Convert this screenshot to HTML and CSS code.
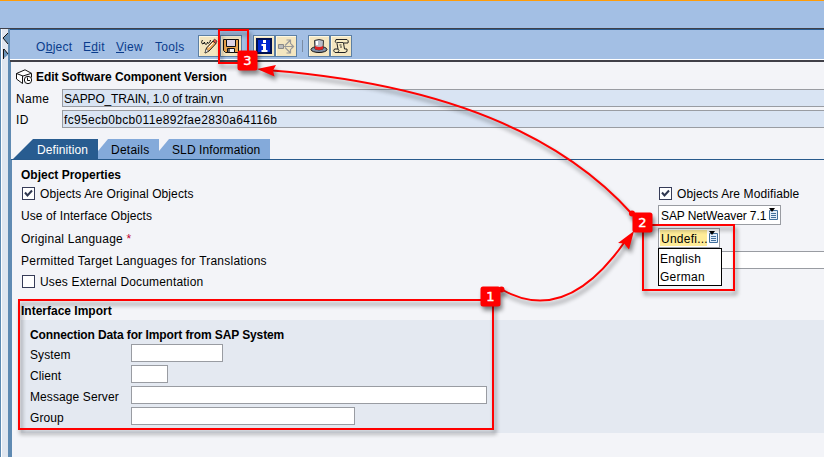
FILE: index.html
```html
<!DOCTYPE html>
<html lang="en">

<head>
    <meta charset="UTF-8" />
    <meta name="viewport" content="width=device-width, initial-scale=1.0" />
    <title>Edit Software Component Version</title>
    <link rel="stylesheet" href="styles.css">
</head>

<body>

    <div class="top-strip"></div>

    <div class="workspace">
        <div class="rail">
            <svg width="10" height="34" viewBox="0 0 10 34">
                <path d="M9 3v13L3 9z" fill="#6a93b8" />
                <path d="M8 4L3 9l5 6" fill="none" stroke="#111" />
                <path d="M3 20v10l6-5z" fill="#6a93b8" />
                <path d="M3.5 20v10M4 20l4 5" fill="none" stroke="#111" />
            </svg>
        </div>

        <div class="main">
            <div class="toolbar">
                <div class="menu">
                    <span class="m-object">O<u>b</u>ject</span>
                    <span class="m-edit">E<u>d</u>it</span>
                    <span class="m-view"><u>V</u>iew</span>
                    <span class="m-tools">Too<u>l</u>s</span>
                </div>
                <div class="tools">
                    <span class="tool">
                        <svg viewBox="0 0 18 18">
                            <path d="M5 16l1.500-5L13 4l3 2.500L9 14z" fill="#f4b060" stroke="#222" />
                            <path d="M13 4l1.500-2L17 4l-1 2.500z" fill="#e05848" stroke="#222" stroke-width=".6" />
                            <path d="M8.500 10.500L13 6" stroke="#fff" />
                            <path d="M5 16l1.200-4 2.300 2z" fill="#fff" stroke="#222" stroke-width=".5" />
                            <path d="M2.500 3C0 7 3.500 8 4.500 5c0 3 3 3 3 0 0 2 2 2 3-2M2.500 6.500h2" fill="none" stroke="#111" />
                        </svg>
                    </span>
                    <span class="tool">
                        <svg viewBox="0 0 18 18">
                            <path d="M1.500 2.500h15v13h-13l-2-2z" fill="#e8a44c" stroke="#111" />
                            <path d="M4.500 2.500h9v7h-9z" fill="#dcd4e4" stroke="#111" />
                            <path d="M5.500 11.500h7v4h-7z" fill="#f0f0f4" stroke="#111" />
                            <path d="M6 12h2v3H6z" fill="#666" />
                        </svg>
                    </span>
                    <span class="tool info">
                        <svg viewBox="0 0 18 18">
                            <path d="M2 2h14v14H2z" fill="#0028d0" stroke="#001050" stroke-width="2" />
                            <path d="M8 3h3v3H8zM6.500 7H11v6h1.500v2h-6v-2H8V9H6.500z" fill="#fff" />
                        </svg>
                    </span>
                    <span class="tool">
                        <svg viewBox="0 0 18 18">
                            <path d="M1.500 7.500h5v4h-5z" fill="#bbb" stroke="#888" />
                            <path d="M6.500 9.500H16M8 8.500l5-5M8 10.500l5 5M9.500 3h4v4M9.500 16h4v-4M14 7l2.500 2.500L14 12" fill="none" stroke="#999" stroke-width="1.200" />
                        </svg>
                    </span>
                    <i class="divider"></i>
                    <span class="tool">
                        <svg viewBox="0 0 18 18">
                            <ellipse cx="9" cy="12.500" rx="8" ry="3" fill="#8090a8" stroke="#111" />
                            <path d="M4.500 3.500q4.500-2 9 0L13 12q-4 2-8 0z" fill="#b8bcc8" stroke="#333" />
                            <path d="M5 9q4 2 8.200 0L13 12q-4 2-8 0z" fill="#e02020" />
                            <path d="M7 4v4" stroke="#fff" stroke-width="2" />
                        </svg>
                    </span>
                    <span class="tool">
                        <svg viewBox="0 0 18 18">
                            <path d="M4 2.500h11q2 1 1 3.500h-4.500l1 6H15q1 3-2 3.500H3q-2.500-1.500-.5-3.500H6L5 6.500Q2 5 4 2.500z" fill="#f8ecc4" stroke="#222" />
                            <path d="M5 5.500h6.500M6 12q2 1.500 0 3M7.500 8h2M8 10h2" fill="none" stroke="#333" />
                        </svg>
                    </span>
                </div>
            </div>

            <div class="page-head">
                <h1>
                    <svg width="17" height="16" viewBox="0 0 17 16">
                        <path d="M.5 4.500L9 .8l6.500 3.500L7 7zM.5 4.500v5.500l6 4.500V7M15.500 4.500v4" fill="#fff" stroke="#111" />
                        <circle cx="12" cy="11" r="3.700" fill="#fff" stroke="#111" />
                        <path d="M11.500 8.500v3h2.500" fill="none" stroke="#111" />
                    </svg>
                    <span>Edit Software Component Version</span>
                </h1>
                <div class="head-row"><label>Name</label><div class="readonly name-value">SAPPO_TRAIN, 1.0 of train.vn</div></div>
                <div class="head-row"><label>ID</label><div class="readonly">fc95ecb0bcb011e892fae2830a64116b</div></div>
            </div>

            <div class="tabs">
                <div class="tab active">Definition</div>
                <div class="tab details">Details</div>
                <div class="tab sld">SLD Information</div>
            </div>

            <div class="content">
                <div class="properties">
                    <div class="col-left">
                        <h2>Object Properties</h2>
                        <div class="check-row">
                            <span class="checkbox"><svg viewBox="0 0 11 11"><path d="M2 4.500l2.500 3L9 2.500" /></svg></span>
                            <span>Objects Are Original Objects</span>
                        </div>
                        <div class="line">Use of Interface Objects</div>
                        <div class="line original">Original Language <b class="required">*</b></div>
                        <div class="line permitted">Permitted Target Languages for Translations</div>
                        <div class="check-row external"><span class="checkbox"></span><span>Uses External Documentation</span></div>
                    </div>
                    <div class="col-right">
                        <div class="check-row">
                            <span class="checkbox"><svg viewBox="0 0 11 11"><path d="M2 4.500l2.500 3L9 2.500" /></svg></span>
                            <span>Objects Are Modifiable</span>
                        </div>
                        <div class="select netweaver">
                            <span>SAP NetWeaver 7.1</span>
                            <svg width="10" height="12" viewBox="0 0 10 12"><path d="M1.500 2.500h8v9h-8z" fill="#e4eefa" stroke="#42709c" /><path d="M3 5.500h5M3 7.500h5M3 9.500h5" stroke="#42709c" /><path d="M1 0h6L4 4z" /></svg>
                        </div>
                        <div class="select language">
                            <span>Undefi...</span>
                            <svg width="10" height="12" viewBox="0 0 10 12"><path d="M1.500 2.500h8v9h-8z" fill="#e4eefa" stroke="#42709c" /><path d="M3 5.500h5M3 7.500h5M3 9.500h5" stroke="#42709c" /><path d="M1 0h6L4 4z" /></svg>
                            <div class="options">
                                <div>English</div>
                                <div>German</div>
                            </div>
                        </div>
                        <div class="target-input"></div>
                    </div>
                </div>

                <h2 class="import-title">Interface Import</h2>
                <div class="import">
                    <h3>Connection Data for Import from SAP System</h3>
                    <div class="field"><label>System</label><i class="input system"></i></div>
                    <div class="field"><label>Client</label><i class="input client"></i></div>
                    <div class="field"><label>Message Server</label><i class="input server"></i></div>
                    <div class="field"><label>Group</label><i class="input group"></i></div>
                </div>
            </div>
        </div>
    </div>

    <!-- numbered steps drawn over the form -->
    <svg class="steps" width="824" height="457" viewBox="0 0 824 457">
        <g class="frames">
            <path d="M19 300h474v129H19z" />
            <path d="M643 225h91v65h-91z" />
            <path d="M219 30h29v33h-29z" />
        </g>
        <g class="arrows">
            <path d="M501 289Q566 327 626 240" />
            <path d="M632 214Q522 91 272 70.500" />
        </g>
        <g class="heads">
            <circle cx="501.500" cy="289.500" r="3" />
            <circle cx="632" cy="213.500" r="3" />
            <path d="M634 231l-16 12 6 0.500 5 6z" />
            <path d="M257 69l19-4-3 5.500 1.500 6z" />
        </g>
        <g class="badges">
            <rect x="480.500" y="286.500" width="20" height="20" rx="2.500" />
            <rect x="632.500" y="212.500" width="20" height="20" rx="2.500" />
            <rect x="237.500" y="50.500" width="20" height="20" rx="2.500" />
        </g>
        <g class="numbers">
            <text x="490.500" y="301">1</text>
            <text x="642.500" y="227">2</text>
            <text x="247.500" y="65">3</text>
        </g>
    </svg>

</body>

</html>
```
FILE: styles.css
```css
* {
    box-sizing: border-box;
}

body {
    margin: 0;
    width: 824px;
    height: 457px;
    overflow: hidden;
    position: relative;
    display: flex;
    flex-direction: column;
    background: #f3f4f8;
    font-family: "Liberation Sans", Arial, sans-serif;
    font-size: 12px;
    line-height: 18px;
    letter-spacing: 0.1px;
    color: #000;
    white-space: nowrap;
}

h1,
h2,
h3 {
    margin: 0;
    font-size: 12px;
    letter-spacing: 0;
}

.top-strip {
    height: 29px;
    flex: none;
    background: #a3bfe4;
    border-top: 1px solid #ff9c08;
    border-bottom: 1px solid #404048;
}

.workspace {
    flex: 1;
    display: flex;
}

.rail {
    width: 12px;
    flex: none;
    background: linear-gradient(to right, #5f8ab2 0 1px, #fff 1px 2px, #e0e6ef 2px 8px, #5f8ab2 8px);
}

.main {
    flex: 1;
    min-width: 0;
    display: flex;
    flex-direction: column;
    margin-left: -1px;
    background: #f3f4f8;
}

.toolbar {
    height: 33px;
    flex: none;
    display: flex;
    margin-left: -1px;
    padding-top: 5px;
    background: #a3bfe4;
    border-top: 1px solid #285a90;
    border-bottom: 2px solid #404048;
    box-shadow: inset 0 -1px #fff;
}

.menu {
    display: flex;
    width: 188px;
    padding: 3px 0 0 26px;
    color: #0a3c8c;
    letter-spacing: 0.3px;
}

.menu span {
    flex: none;
}

.m-object {
    width: 47px;
}

.m-edit {
    width: 33px;
}

.m-view {
    width: 39px;
}

.tools {
    display: flex;
    align-items: center;
    height: 22px;
}

.tool {
    width: 22px;
    height: 22px;
    padding: 1px;
    background: #f4e6c0;
    border: 1px solid #5c7fa4;
    box-shadow: inset 1px 1px #fff8e0;
}

.tool svg {
    display: block;
    width: 18px;
    height: 18px;
}

.tool.info {
    margin-left: 11px;
}

.divider {
    width: 1px;
    height: 12px;
    margin: 0 5px;
    background: #7a8ca4;
}

.page-head {
    height: 77px;
    flex: none;
    padding: 6px 0 0 5px;
}

h1 {
    display: flex;
    align-items: center;
    height: 18px;
    letter-spacing: -0.08px;
}

h1 svg {
    margin-right: 3px;
}

.head-row {
    display: flex;
    height: 21px;
    padding-top: 3px;
}

.head-row label {
    width: 46px;
    line-height: 21px;
    letter-spacing: 0.3px;
}

.readonly {
    flex: 1;
    height: 18px;
    padding-left: 1px;
    border: 1px solid #999ca2;
    border-right: 0;
    background: #d9e4f3;
    line-height: 18px;
    letter-spacing: 0.32px;
}

.name-value {
    letter-spacing: -0.15px;
}

.tabs {
    display: flex;
    height: 21px;
    flex: none;
    padding-left: 2px;
    border-bottom: 1px solid #285a8c;
}

.tab {
    height: 20px;
    line-height: 22px;
    background: #84aada;
}

.tab.active {
    width: 85px;
    padding-left: 24px;
    background: #285c90;
    color: #fff;
    clip-path: polygon(20px 0, 100% 0, 100% 100%, 0 100%);
}

.tab.details {
    width: 61px;
    padding-left: 13px;
    letter-spacing: 0.25px;
    clip-path: polygon(10px 0, 100% 0, 100% 100%, 0 100%, 0 12px);
}

.tab.sld {
    width: 111px;
    padding-left: 13px;
    clip-path: polygon(10px 0, 100% 0, 100% 100%, 0 100%, 0 12px);
}

.content {
    flex: 1;
    padding-left: 9px;
    border-left: 1px solid #5f8ab2;
}

.properties {
    display: flex;
    height: 142px;
}

.col-left {
    width: 637px;
    padding-top: 6px;
}

.check-row {
    display: flex;
    align-items: center;
    height: 18px;
    padding-left: 1px;
    line-height: 20px;
}

.check-row span:last-child {
    height: 18px;
}

.external {
    letter-spacing: 0.17px;
}

.col-left .check-row .checkbox,
.col-right .check-row .checkbox {
    height: 13px;
}

.checkbox {
    width: 13px;
    margin-right: 5px;
    background: #fff;
    border: 1px solid #363c58;
}

.checkbox svg {
    display: block;
    width: 11px;
    height: 11px;
    fill: none;
    stroke: #303850;
    stroke-width: 2;
}

.line {
    height: 23px;
    line-height: 28px;
}

.original,
.permitted {
    letter-spacing: 0.23px;
}

.permitted {
    height: 24px;
    line-height: 26px;
}

.required {
    color: #c00030;
    font-weight: normal;
}

.col-right {
    flex: 1;
    padding-top: 24px;
}

.select {
    position: relative;
    display: flex;
    align-items: center;
    height: 20px;
    margin-bottom: 3px;
    padding: 1px;
    border: 1px solid #999ca2;
    background: #fff;
}

.select svg {
    flex: none;
    margin-top: -2px;
}

.netweaver {
    width: 123px;
    margin-top: 3px;
    padding-left: 2px;
    letter-spacing: -0.1px;
}

.netweaver span {
    width: 107px;
    height: 16px;
}

.language {
    width: 62px;
    letter-spacing: 0.25px;
}

.language span {
    width: 47px;
    height: 16px;
    padding-left: 1px;
    background: #ffec98;
}

.language svg {
    margin-left: 1px;
}

.options {
    position: absolute;
    z-index: 2;
    top: 19px;
    left: -1px;
    width: 64px;
    height: 38px;
    padding: 1px 0 0 1px;
    border: 1px solid #000;
    background: #fff;
}

.target-input {
    height: 18px;
    border: 1px solid #999ca2;
    border-right: 0;
    background: #fff;
}

.import-title {
    height: 18px;
}

.import {
    height: 113px;
    padding: 5px 0 0 9px;
    background: #e4e9f1;
}

h3 {
    height: 18px;
    line-height: 20px;
    letter-spacing: -0.12px;
}

.field {
    display: flex;
    height: 21px;
}

.field label {
    width: 101px;
    line-height: 24px;
}

.input {
    height: 18px;
    margin-top: 1px;
    border: 1px solid #999ca2;
    background: #fff;
}

.system {
    width: 92px;
}

.client {
    width: 37px;
}

.server {
    width: 356px;
}

.group {
    width: 224px;
}

.steps {
    position: absolute;
    top: 0;
    left: 0;
    z-index: 5;
}

.steps g {
    filter: drop-shadow(2px 4px 2px rgba(0, 0, 0, 0.45));
}

.frames,
.arrows {
    fill: none;
    stroke: #f00;
    stroke-width: 2;
}

.heads,
.badges {
    fill: #f00;
}

.steps .numbers {
    filter: none;
    fill: #fff;
    stroke: #fff;
    stroke-width: 0.4;
    font-family: "DejaVu Sans", Verdana, sans-serif;
    font-size: 13px;
    letter-spacing: 0;
    text-anchor: middle;
}
```
